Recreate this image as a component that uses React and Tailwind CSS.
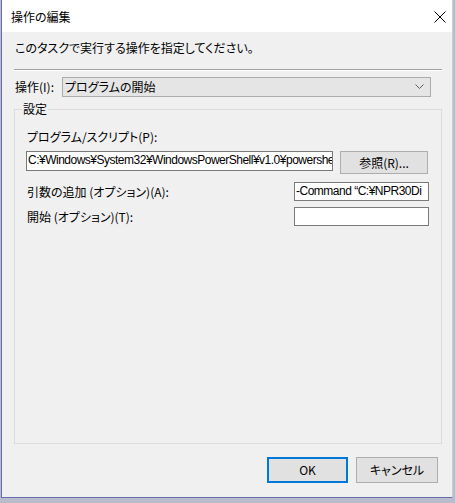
import React from "react";

const font = "font-['Noto_Sans_CJK_JP','Noto_Sans',sans-serif] [font-feature-settings:'palt']";

function TextBox({ className = "", value = "" }) {
  return (
    <div
      className={`bg-white border border-[#7a7a7a] overflow-hidden whitespace-nowrap text-[12px] leading-[17px] pl-[1px] tracking-[-0.5px] text-black font-['Liberation_Sans','Noto_Sans_CJK_JP',sans-serif] ${className}`}
    >
      {value}
    </div>
  );
}

function Btn({ children, className = "" }) {
  return (
    <div
      className={`bg-[#e1e1e1] border border-[#adadad] flex items-center justify-center text-[12px] text-black ${className}`}
    >
      {children}
    </div>
  );
}

export default function App() {
  return (
    <div className={`w-[455px] h-[503px] bg-[#b9bccb] overflow-hidden ${font}`}>
      <div className="ml-px w-[452px] h-[498px] border-l border-r border-b border-l-[#6a6aae] border-b-[#6a6aae] border-r-[#c9cbe0] flex flex-col bg-[#f0f0f0]">
        {/* Title bar */}
        <div className="h-[32px] bg-white flex items-center justify-between pl-[9px] pr-[6px] shrink-0">
          <span className="text-[12px] text-black leading-[16px] mt-[2px]">操作の編集</span>
          <svg width="12" height="12" viewBox="0 0 12 12" className="mt-[1px]">
            <path d="M0.5 0.5 L11.5 11.5 M11.5 0.5 L0.5 11.5" stroke="#000" strokeWidth="1" fill="none" />
          </svg>
        </div>

        {/* Body */}
        <div className="flex-1 flex flex-col pl-[12px] pr-[10px] pt-[8px]">
          <div className="ml-px text-[12px] leading-[16px] text-black">
            このタスクで実行する操作を指定してください。
          </div>
          <div className="mt-[13px] h-[2px] border-t border-[#a0a0a0] border-b border-b-white" />

          <div className="mt-[6px] flex items-center h-[20px]">
            <span className="w-[48px] pl-px text-[12px] leading-[16px] text-black">操作(I):</span>
            <div className="w-[369px] h-[20px] bg-[#e5e5e5] border border-[#acacac] flex items-center justify-between pl-[2px] pr-[6px]">
              <span className="text-[12px] leading-[16px] text-black">プログラムの開始</span>
              <svg width="9" height="6" viewBox="0 0 9 6">
                <path d="M0.5 0.5 L4.5 4.5 L8.5 0.5" stroke="#606060" strokeWidth="1" fill="none" />
              </svg>
            </div>
          </div>

          {/* Group box */}
          <div className="relative mt-[12px] flex-1 border border-[#dcdcdc] flex flex-col pl-[11px] pr-[12px] pt-[19px]">
            <span className="absolute left-[7px] top-[-9px] bg-[#f0f0f0] px-px text-[12px] leading-[16px] text-black">
              設定
            </span>
            <div className="ml-px text-[12px] leading-[16px] text-black">プログラム/スクリプト(P):</div>
            <div className="mt-[6px] flex items-start gap-[7px]">
              <TextBox
                className="w-[307px] h-[20px]"
                value="C:¥Windows¥System32¥WindowsPowerShell¥v1.0¥powershe"
              />
              <Btn className="w-[88px] h-[23px]">参照(R)...</Btn>
            </div>
            <div className="mt-[8px] flex items-center justify-between">
              <span className="ml-px text-[12px] leading-[16px] text-black">引数の追加 (オプション)(A):</span>
              <TextBox className="w-[135px] h-[19px]" value="-Command “C:¥NPR30Di" />
            </div>
            <div className="mt-[6px] flex items-center justify-between">
              <span className="ml-px text-[12px] leading-[16px] text-black">開始 (オプション)(T):</span>
              <TextBox className="w-[135px] h-[19px]" value="" />
            </div>
          </div>

          {/* Buttons */}
          <div className="mt-[13px] mb-[14px] flex justify-end gap-[8px] pr-[4px]">
            <div className="w-[81px] h-[26px] bg-[#e1e1e1] border-2 border-[#0078d7] flex items-center justify-center text-[12px] text-black">
              OK
            </div>
            <Btn className="w-[82px] h-[26px]">キャンセル</Btn>
          </div>
        </div>
      </div>
    </div>
  );
}
